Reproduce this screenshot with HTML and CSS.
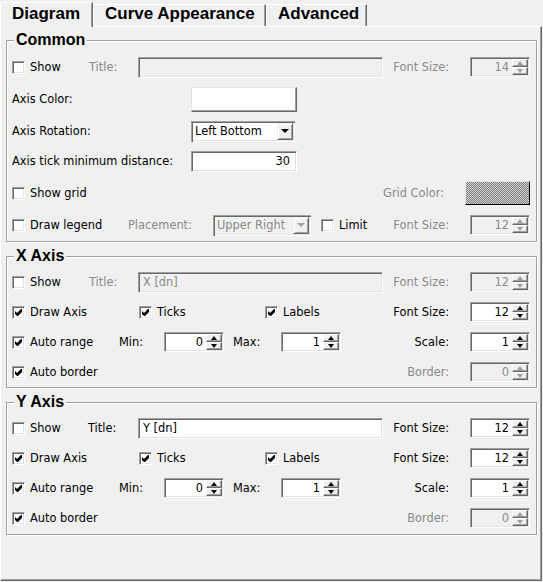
FILE: index.html
```html
<!DOCTYPE html>
<html>
<head>
<meta charset="utf-8">
<link rel="stylesheet" href="styles.css">
</head>
<body>
<div class="tabs">
  <div class="tab sel t1">Diagram</div>
  <div class="tab t2">Curve Appearance</div>
  <div class="tab t3">Advanced</div>
</div>
<div class="panel">

  <div class="group">
    <div class="legend"><span>Common</span></div>
    <div class="rows pb2">
      <div class="row h32">
        <label class="cb w77"><span class="box"></span>Show</label>
        <span class="lbl dis w49">Title:</span>
        <div class="tb dis w245"></div>
        <div class="right">
          <span class="rlbl dis">Font Size:</span>
          <div class="spin dis"><span class="val">14</span><span class="btns"><i class="up"></i><i class="dn"></i></span></div>
        </div>
      </div>
      <div class="row h32">
        <span class="lbl w179">Axis Color:</span>
        <div class="colorbox"></div>
      </div>
      <div class="row h32">
        <span class="lbl w179">Axis Rotation:</span>
        <div class="combo w104"><span class="txt">Left Bottom</span><span class="dd"></span></div>
      </div>
      <div class="row h28">
        <span class="lbl w179">Axis tick minimum distance:</span>
        <div class="tb num w106">30</div>
      </div>
      <div class="row h36">
        <label class="cb"><span class="box"></span>Show grid</label>
        <div class="right">
          <span class="rlbl dis">Grid Color:</span>
          <div class="gridbox"></div>
        </div>
      </div>
      <div class="row h28">
        <label class="cb w116"><span class="box"></span>Draw legend</label>
        <span class="lbl dis w85">Placement:</span>
        <div class="combo dis w98"><span class="txt">Upper Right</span><span class="dd"></span></div>
        <label class="cb ml10"><span class="box"></span>Limit</label>
        <div class="right">
          <span class="rlbl dis">Font Size:</span>
          <div class="spin dis"><span class="val">12</span><span class="btns"><i class="up"></i><i class="dn"></i></span></div>
        </div>
      </div>
    </div>
  </div>

  <div class="group">
    <div class="legend"><span>X Axis</span></div>
    <div class="rows">
      <div class="row h30">
        <label class="cb w77"><span class="box"></span>Show</label>
        <span class="lbl dis w49">Title:</span>
        <div class="tb dis w245">X [dn]</div>
        <div class="right">
          <span class="rlbl dis">Font Size:</span>
          <div class="spin dis"><span class="val">12</span><span class="btns"><i class="up"></i><i class="dn"></i></span></div>
        </div>
      </div>
      <div class="row h30">
        <label class="cb w127"><span class="box on"><svg viewBox="0 0 11 11"><polygon points="2,4 4,6 8,2 9,2 9,5 5,9 4,9 2,7"/></svg></span>Draw Axis</label>
        <label class="cb w126"><span class="box on"><svg viewBox="0 0 11 11"><polygon points="2,4 4,6 8,2 9,2 9,5 5,9 4,9 2,7"/></svg></span>Ticks</label>
        <label class="cb"><span class="box on"><svg viewBox="0 0 11 11"><polygon points="2,4 4,6 8,2 9,2 9,5 5,9 4,9 2,7"/></svg></span>Labels</label>
        <div class="right">
          <span class="rlbl">Font Size:</span>
          <div class="spin"><span class="val">12</span><span class="btns"><i class="up"></i><i class="dn"></i></span></div>
        </div>
      </div>
      <div class="row h30">
        <label class="cb w107"><span class="box on"><svg viewBox="0 0 11 11"><polygon points="2,4 4,6 8,2 9,2 9,5 5,9 4,9 2,7"/></svg></span>Auto range</label>
        <span class="lbl w45">Min:</span>
        <div class="spin"><span class="val">0</span><span class="btns"><i class="up"></i><i class="dn"></i></span></div>
        <span class="lbl w48 ml9">Max:</span>
        <div class="spin"><span class="val">1</span><span class="btns"><i class="up"></i><i class="dn"></i></span></div>
        <div class="right">
          <span class="rlbl">Scale:</span>
          <div class="spin"><span class="val">1</span><span class="btns"><i class="up"></i><i class="dn"></i></span></div>
        </div>
      </div>
      <div class="row h30">
        <label class="cb"><span class="box on"><svg viewBox="0 0 11 11"><polygon points="2,4 4,6 8,2 9,2 9,5 5,9 4,9 2,7"/></svg></span>Auto border</label>
        <div class="right">
          <span class="rlbl dis">Border:</span>
          <div class="spin dis"><span class="val">0</span><span class="btns"><i class="up"></i><i class="dn"></i></span></div>
        </div>
      </div>
    </div>
  </div>

  <div class="group">
    <div class="legend"><span>Y Axis</span></div>
    <div class="rows pb1">
      <div class="row h30">
        <label class="cb w76"><span class="box"></span>Show</label>
        <span class="lbl w50">Title:</span>
        <div class="tb w245">Y [dn]</div>
        <div class="right">
          <span class="rlbl">Font Size:</span>
          <div class="spin"><span class="val">12</span><span class="btns"><i class="up"></i><i class="dn"></i></span></div>
        </div>
      </div>
      <div class="row h30">
        <label class="cb w127"><span class="box on"><svg viewBox="0 0 11 11"><polygon points="2,4 4,6 8,2 9,2 9,5 5,9 4,9 2,7"/></svg></span>Draw Axis</label>
        <label class="cb w126"><span class="box on"><svg viewBox="0 0 11 11"><polygon points="2,4 4,6 8,2 9,2 9,5 5,9 4,9 2,7"/></svg></span>Ticks</label>
        <label class="cb"><span class="box on"><svg viewBox="0 0 11 11"><polygon points="2,4 4,6 8,2 9,2 9,5 5,9 4,9 2,7"/></svg></span>Labels</label>
        <div class="right">
          <span class="rlbl">Font Size:</span>
          <div class="spin"><span class="val">12</span><span class="btns"><i class="up"></i><i class="dn"></i></span></div>
        </div>
      </div>
      <div class="row h30">
        <label class="cb w107"><span class="box on"><svg viewBox="0 0 11 11"><polygon points="2,4 4,6 8,2 9,2 9,5 5,9 4,9 2,7"/></svg></span>Auto range</label>
        <span class="lbl w45">Min:</span>
        <div class="spin"><span class="val">0</span><span class="btns"><i class="up"></i><i class="dn"></i></span></div>
        <span class="lbl w48 ml9">Max:</span>
        <div class="spin"><span class="val">1</span><span class="btns"><i class="up"></i><i class="dn"></i></span></div>
        <div class="right">
          <span class="rlbl">Scale:</span>
          <div class="spin"><span class="val">1</span><span class="btns"><i class="up"></i><i class="dn"></i></span></div>
        </div>
      </div>
      <div class="row h30">
        <label class="cb"><span class="box on"><svg viewBox="0 0 11 11"><polygon points="2,4 4,6 8,2 9,2 9,5 5,9 4,9 2,7"/></svg></span>Auto border</label>
        <div class="right">
          <span class="rlbl dis">Border:</span>
          <div class="spin dis"><span class="val">0</span><span class="btns"><i class="up"></i><i class="dn"></i></span></div>
        </div>
      </div>
    </div>
  </div>

</div>
</body>
</html>
```
FILE: styles.css
```css
* { box-sizing: border-box; }
html, body { margin: 0; padding: 0; }
body {
  width: 543px;
  height: 582px;
  overflow: hidden;
  background: #f0f0f0;
  color: #000;
  font-family: "DejaVu Sans", sans-serif;
  font-size: 11.4px;
}

/* tabs */
.tabs {
  display: flex;
  align-items: flex-end;
  height: 26px;
  position: relative;
  z-index: 1;
}
.tab {
  height: 22px;
  padding: 0 0 0 11px;
  font-family: "Liberation Sans", Arial, sans-serif;
  font-weight: bold;
  font-size: 17px;
  line-height: 18px;
  background: #f0f0f0;
  border-top: 1px solid #fff;
  border-left: 1px solid #fff;
  border-right: 1px solid #696969;
  box-shadow: inset -1px 0 #a0a0a0;
  white-space: nowrap;
}
.tab.sel {
  height: 25px;
  margin-bottom: -1px;
  padding-top: 2px;
}
.t1 { width: 93px; }
.t2 { width: 173px; }
.t3 { width: 101px; }

/* panel */
.panel {
  width: 542px;
  height: 555px;
  border-top: 1px solid #fff;
  border-left: 1px solid #fff;
  border-right: 1px solid #696969;
  border-bottom: 1px solid #696969;
  box-shadow: inset -1px -1px #a0a0a0;
  padding-top: 13px;
}

/* group boxes */
.group {
  margin: 0 4px 0 5px;
  border: 1px solid #a0a0a0;
  box-shadow: inset 1px 1px #fff, 1px 1px #fff;
  padding: 0 6px 0 5px;
}
.group + .group { margin-top: 14px; }
.legend {
  margin: -10px 0 0 2px;
  height: 18px;
  line-height: 18px;
  font-family: "Liberation Sans", Arial, sans-serif;
  font-weight: bold;
  font-size: 16px;
}
.legend span { background: #f0f0f0; padding: 0 2px; }

.rows { padding-top: 2px; }
.pb2 { padding-bottom: 2px; }
.pb1 { padding-bottom: 1px; }

.row { display: flex; align-items: center; }
.h28 { height: 28px; }
.h30 { height: 30px; }
.h32 { height: 32px; }
.h36 { height: 36px; }

.right { margin-left: auto; display: flex; align-items: center; }
.rlbl { width: 66px; text-align: right; margin-right: 21px; white-space: nowrap; }

.lbl { flex: none; white-space: nowrap; }
.dis { color: #8a8a8a; }

.w45 { width: 45px; }
.w48 { width: 48px; }
.w49 { width: 49px; }
.w50 { width: 50px; }
.w76 { width: 76px; }
.w77 { width: 77px; }
.w85 { width: 85px; }
.w98 { width: 98px; }
.w104 { width: 104px; }
.w106 { width: 106px; }
.w107 { width: 107px; }
.w116 { width: 116px; }
.w126 { width: 126px; }
.w127 { width: 127px; }
.w179 { width: 179px; }
.w245 { width: 245px; }
.ml9 { margin-left: 9px; }
.ml10 { margin-left: 10px; }

/* checkbox */
.cb {
  display: flex;
  align-items: center;
  gap: 5px;
  flex: none;
  white-space: nowrap;
}
.box {
  width: 13px;
  height: 13px;
  flex: none;
  background: #fff;
  border: 1px solid;
  border-color: #a0a0a0 #fff #fff #a0a0a0;
  box-shadow: inset 1px 1px #696969, inset -1px -1px #e3e3e3;
}
.box svg { display: block; width: 11px; height: 11px; }
.box polygon { fill: #000; }

/* sunken text field */
.tb {
  height: 21px;
  flex: none;
  background: #fff;
  border: 1px solid;
  border-color: #a0a0a0 #fff #fff #a0a0a0;
  box-shadow: inset 1px 1px #696969, inset -1px -1px #e3e3e3;
  padding: 0 3px 0 4px;
  line-height: 19px;
  white-space: nowrap;
}
.tb.dis { background: #f0f0f0; }
.tb.num { text-align: right; padding-right: 6px; }

/* spinner */
.spin {
  width: 60px;
  height: 20px;
  flex: none;
  display: flex;
  padding: 1px;
  background: #fff;
  border: 1px solid;
  border-color: #a0a0a0 #fff #fff #a0a0a0;
  box-shadow: inset 1px 1px #696969, inset -1px -1px #e3e3e3;
}
.spin.dis { background: #f0f0f0; }
.val {
  flex: 1;
  text-align: right;
  padding-right: 3px;
  line-height: 16px;
}
.btns { width: 16px; display: flex; flex-direction: column; }
.btns i {
  flex: 1;
  display: flex;
  align-items: center;
  justify-content: center;
  background: #f0f0f0;
  border: 1px solid;
  border-color: #fff #696969 #696969 #fff;
  box-shadow: inset -1px -1px #a0a0a0;
}
.up::before {
  content: "";
  border-left: 3.5px solid transparent;
  border-right: 3.5px solid transparent;
  border-bottom: 4px solid #000;
}
.dn::before {
  content: "";
  border-left: 3.5px solid transparent;
  border-right: 3.5px solid transparent;
  border-top: 4px solid #000;
}
.spin.dis .up::before { border-bottom-color: #a0a0a0; }
.spin.dis .dn::before { border-top-color: #a0a0a0; }

/* combo box */
.combo {
  height: 21px;
  flex: none;
  display: flex;
  padding: 2px;
  background: #fff;
  border: 0;
  box-shadow: inset 1px 1px #a0a0a0, inset 2px 2px #696969, inset -1px -1px #fff, inset -2px -2px #e3e3e3;
}
.combo .txt { flex: 1; padding-left: 2px; line-height: 17px; white-space: nowrap; }
.combo .dd {
  width: 16px;
  display: flex;
  align-items: center;
  justify-content: center;
  background: #f0f0f0;
  border: 1px solid;
  border-color: #f0f0f0 #696969 #696969 #f0f0f0;
  box-shadow: inset 1px 1px #fff, inset -1px -1px #a0a0a0;
}
.combo .dd::before {
  content: "";
  border-left: 4px solid transparent;
  border-right: 4px solid transparent;
  border-top: 4px solid #000;
}
.combo.dis { background: #f0f0f0; }
.combo.dis .dd::before { border-top-color: #a0a0a0; }

/* colour swatches */
.colorbox {
  width: 106px;
  height: 25px;
  flex: none;
  background: #fff;
  border: 1px solid;
  border-color: #e3e3e3 #696969 #696969 #e3e3e3;
  box-shadow: inset -1px -1px #a0a0a0, inset 1px 1px #fff;
}
.gridbox {
  width: 65px;
  height: 24px;
  flex: none;
  border: 1px solid;
  border-color: #e3e3e3 #000 #000 #e3e3e3;
  background: repeating-conic-gradient(#808080 0 25%, #d0d0d0 0 50%) 0 0 / 2px 2px;
}
```
